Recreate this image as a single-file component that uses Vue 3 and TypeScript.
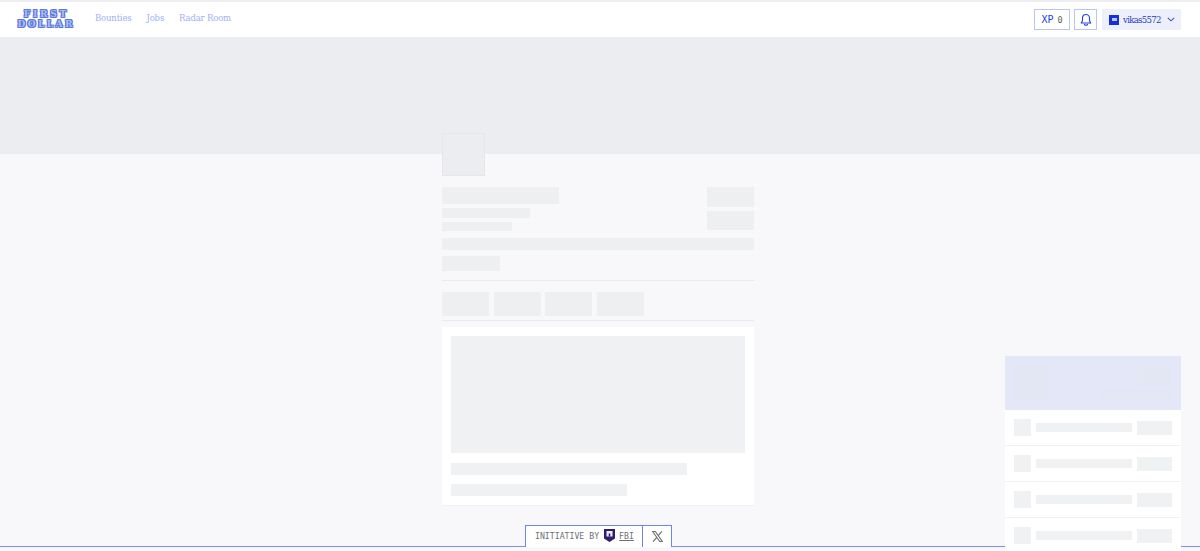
<script setup lang="ts">
const navItems: string[] = ['Bounties', 'Jobs', 'Radar Room']
const tabs: number[] = [1, 2, 3, 4]
const rows: number[] = [1, 2, 3, 4]
</script>

<template>
  <div class="page">
    <header class="topbar">
      <div class="brand">
        <span class="logo">
          <span class="logo-line first">FIRST</span>
          <span class="logo-line second">DOLLAR</span>
        </span>
        <nav class="nav">
          <a v-for="item in navItems" :key="item" class="nav-link">{{ item }}</a>
        </nav>
      </div>
      <div class="actions">
        <div class="xp">XP <span class="xp-count">0</span></div>
        <div class="bell">
          <svg width="12" height="13" viewBox="0 0 12 13" fill="none" stroke="#1b3fe0" stroke-width="1.1">
            <path d="M1.2 10h9.6c-.9-1-1.3-1.8-1.3-3.2V5a3.5 3.5 0 0 0-7 0v1.8C2.500 8.200 2.100 9 1.200 10Z" stroke-linejoin="round" />
            <path d="M4.400 11.500c.8.700 2.400.7 3.200 0" stroke-linecap="round" />
          </svg>
        </div>
        <div class="user">
          <span class="avatar"><span class="avatar-mark"></span></span>
          <span class="username">vikas5572</span>
          <svg class="chevron" width="8" height="5" viewBox="0 0 8 5" fill="none" stroke="#3a56c8" stroke-width="1.1">
            <path d="M.8.800 4 3.800 7.200.800" />
          </svg>
        </div>
      </div>
    </header>

    <div class="hero"></div>

    <main class="column">
      <div class="org-logo"></div>
      <div class="summary">
        <div class="summary-left">
          <div class="sk title"></div>
          <div class="sk sub-a"></div>
          <div class="sk sub-b"></div>
        </div>
        <div class="summary-right">
          <div class="sk side-btn"></div>
          <div class="sk side-btn"></div>
        </div>
      </div>
      <div class="sk wide-bar"></div>
      <div class="sk small-btn"></div>
      <div class="rule first-rule"></div>
      <div class="tabs">
        <div v-for="t in tabs" :key="t" class="sk tab"></div>
      </div>
      <div class="rule second-rule"></div>
      <section class="card">
        <div class="sk-light picture"></div>
        <div class="sk-light line-a"></div>
        <div class="sk-light line-b"></div>
      </section>
    </main>

    <aside class="panel">
      <div class="panel-head">
        <div class="panel-thumb"></div>
        <div class="panel-meta">
          <div class="panel-meta-a"></div>
          <div class="panel-meta-b"></div>
        </div>
      </div>
      <div v-for="r in rows" :key="r" class="panel-row">
        <div class="sk-light row-thumb"></div>
        <div class="sk-light row-bar"></div>
        <div class="sk-light row-end"></div>
      </div>
    </aside>

    <footer class="footer">
      <div class="pill">
        <div class="pill-main">
          <span class="pill-label">INITIATIVE BY</span>
          <svg width="11" height="13" viewBox="0 0 11 13">
            <path d="M0 0h11v9.500L5.500 13 0 9.500Z" fill="#2f1d6e" />
            <path d="M2.500 2h6v5.500h-6Z" fill="#efeaf8" />
            <path d="M4.700 4.500h1.600v3h-1.600Z" fill="#2f1d6e" />
          </svg>
          <span class="pill-link">FBI</span>
        </div>
        <div class="pill-x">
          <svg width="11" height="11" viewBox="0 0 10 10" fill="none" stroke="#6a6d74">
            <path d="M.600.500 3 .500 9.400 9.500 7 9.500Z" stroke-width="1" />
            <path d="M9 .400 5.600 4.200M4.300 5.800 1 9.600" stroke-width="1.100" />
          </svg>
        </div>
      </div>
    </footer>
  </div>
</template>

<style>
html,
body {
  margin: 0;
  background: #f8f8fa;
}
</style>

<style scoped>
.page {
  position: relative;
  height: 551px;
  overflow: hidden;
  background: #f8f8fa;
  border-top: 2px solid #eeeef0;
  box-sizing: border-box;
}
.topbar {
  height: 35px;
  background: #fff;
  display: flex;
  justify-content: space-between;
  padding: 0 19px 0 15px;
}
.brand {
  display: flex;
  align-items: flex-start;
}
.logo {
  width: 60px;
  margin-top: 8px;
  display: flex;
  flex-direction: column;
  align-items: center;
  font-family: "DejaVu Serif", serif;
  font-weight: 700;
  color: #aebdf3;
  text-shadow: 1px 0 0 #5a77de, -1px 0 0 #5a77de, 0 1px 0 #5a77de, 0 -1px 0 #5a77de, 1px 1px 0 #5a77de, -1px -1px 0 #5a77de, 1px -1px 0 #5a77de, -1px 1px 0 #5a77de;
  line-height: 9.500px;
}
.logo-line {
  display: block;
  white-space: nowrap;
}
.first {
  font-size: 9px;
  letter-spacing: 2.800px;
  margin-right: -2.800px;
}
.second {
  font-size: 9px;
  letter-spacing: 2.400px;
  margin-right: -2.400px;
}
.nav {
  display: flex;
  gap: 15px;
  margin-left: 20px;
  margin-top: 9px;
  font-family: "DejaVu Serif", serif;
  font-stretch: condensed;
  font-size: 9.500px;
  letter-spacing: -0.200px;
  line-height: 14px;
  color: #a3b1f4;
}
.nav-link {
  white-space: nowrap;
}
.actions {
  display: flex;
  align-items: flex-start;
  padding-top: 7px;
}
.xp {
  width: 36px;
  height: 21px;
  box-sizing: border-box;
  border: 1px solid #bcc6f5;
  display: flex;
  align-items: center;
  justify-content: center;
  gap: 4px;
  font-family: "DejaVu Sans Mono", monospace;
  font-size: 10px;
  color: #1b3fe0;
}
.xp-count {
  font-size: 8.500px;
  color: #5c5f66;
}
.bell {
  width: 23px;
  height: 21px;
  margin-left: 4px;
  box-sizing: border-box;
  border: 1px solid #bcc6f5;
  display: flex;
  align-items: center;
  justify-content: center;
}
.user {
  width: 79px;
  height: 21px;
  margin-left: 5px;
  background: #edf0fb;
  display: flex;
  align-items: center;
  padding-left: 7px;
  box-sizing: border-box;
}
.avatar {
  width: 10px;
  height: 10px;
  background: #1430d6;
  display: flex;
  align-items: center;
  justify-content: center;
}
.avatar-mark {
  width: 5px;
  height: 3px;
  background: #b9c4f5;
}
.username {
  margin-left: 4px;
  font-family: "DejaVu Serif", serif;
  font-stretch: condensed;
  font-size: 9.500px;
  letter-spacing: -0.700px;
  color: #1f3cc4;
}
.chevron {
  margin-left: 6px;
}
.hero {
  height: 117px;
  background: #ecedf0;
}
.column {
  width: 312px;
  margin: -21px auto 0 442px;
  position: relative;
}
.sk {
  background: #eeeff1;
}
.sk-light {
  background: #f0f1f3;
}
.org-logo {
  width: 43px;
  height: 43px;
  box-sizing: border-box;
  background: #ecedf0;
  border: 1px solid #e6e7eb;
}
.summary {
  display: flex;
  justify-content: space-between;
  margin-top: 11px;
}
.title {
  width: 117px;
  height: 17px;
}
.sub-a {
  width: 88px;
  height: 10px;
  margin-top: 4px;
}
.sub-b {
  width: 70px;
  height: 9px;
  margin-top: 4px;
}
.summary-right {
  display: flex;
  flex-direction: column;
  gap: 4px;
}
.side-btn {
  width: 47px;
  height: 19.500px;
}
.wide-bar {
  height: 12.500px;
  margin-top: 6.500px;
}
.small-btn {
  width: 58px;
  height: 15px;
  margin-top: 6px;
}
.rule {
  height: 1px;
  background: #e9e9ec;
}
.first-rule {
  margin-top: 9px;
}
.tabs {
  display: flex;
  gap: 4.600px;
  margin-top: 11px;
}
.tab {
  width: 47px;
  height: 24px;
}
.second-rule {
  margin-top: 4px;
}
.card {
  margin-top: 6px;
  height: 178px;
  box-sizing: border-box;
  background: #fff;
  padding: 9px;
  box-shadow: 0 1px 0 #f1f1f3;
}
.picture {
  height: 117px;
}
.line-a {
  width: 235.500px;
  height: 11.500px;
  margin-top: 10px;
}
.line-b {
  width: 176px;
  height: 12px;
  margin-top: 9.500px;
}
.panel {
  position: absolute;
  left: 1005px;
  top: 354px;
  width: 176px;
  z-index: 2;
}
.panel-head {
  height: 54px;
  box-sizing: border-box;
  background: #e4e7f7;
  padding: 10px 9px;
  display: flex;
  justify-content: space-between;
}
.panel-thumb {
  width: 35px;
  height: 34px;
  background: #e3e6f3;
}
.panel-meta {
  display: flex;
  flex-direction: column;
  align-items: flex-end;
  padding-top: 1px;
}
.panel-meta-a {
  width: 35px;
  height: 18px;
  background: #e3e6f3;
}
.panel-meta-b {
  width: 70px;
  height: 9px;
  margin-top: 5px;
  background: #e3e6f3;
}
.panel-row {
  height: 36px;
  box-sizing: border-box;
  background: #fff;
  border-bottom: 1px solid #f2f2f4;
  padding: 0 9px;
  display: flex;
  align-items: center;
}
.row-thumb {
  width: 17px;
  height: 17px;
}
.row-bar {
  width: 96px;
  height: 9px;
  margin-left: 5px;
}
.row-end {
  width: 35px;
  height: 14px;
  margin-left: 5px;
}
.footer {
  position: absolute;
  left: 0;
  right: 0;
  top: 523px;
  height: 26px;
  box-sizing: border-box;
  display: flex;
  justify-content: flex-start;
  padding-left: 525px;
}
.footer::after {
  content: "";
  position: absolute;
  left: 0;
  right: 0;
  top: 21px;
  height: 1px;
  background: #7f8ff0;
}
.pill {
  height: 22px;
  box-sizing: border-box;
  display: flex;
  background: #fff;
  border: 1px solid #6f84f0;
  border-bottom: 0;
  position: relative;
  z-index: 1;
}
.pill-main {
  width: 117px;
  box-sizing: border-box;
  padding: 0 0 2px 9px;
  display: flex;
  align-items: center;
  border-right: 1px solid #6f84f0;
  font-family: "DejaVu Sans Mono", monospace;
  font-size: 8.200px;
  color: #6d7077;
}
.pill-main svg {
  margin-left: 5px;
}
.pill-label {
  white-space: nowrap;
}
.pill-link {
  margin-left: 4px;
  text-decoration: underline;
}
.pill-x {
  width: 28px;
  padding-bottom: 1px;
  display: flex;
  align-items: center;
  justify-content: center;
}
</style>
